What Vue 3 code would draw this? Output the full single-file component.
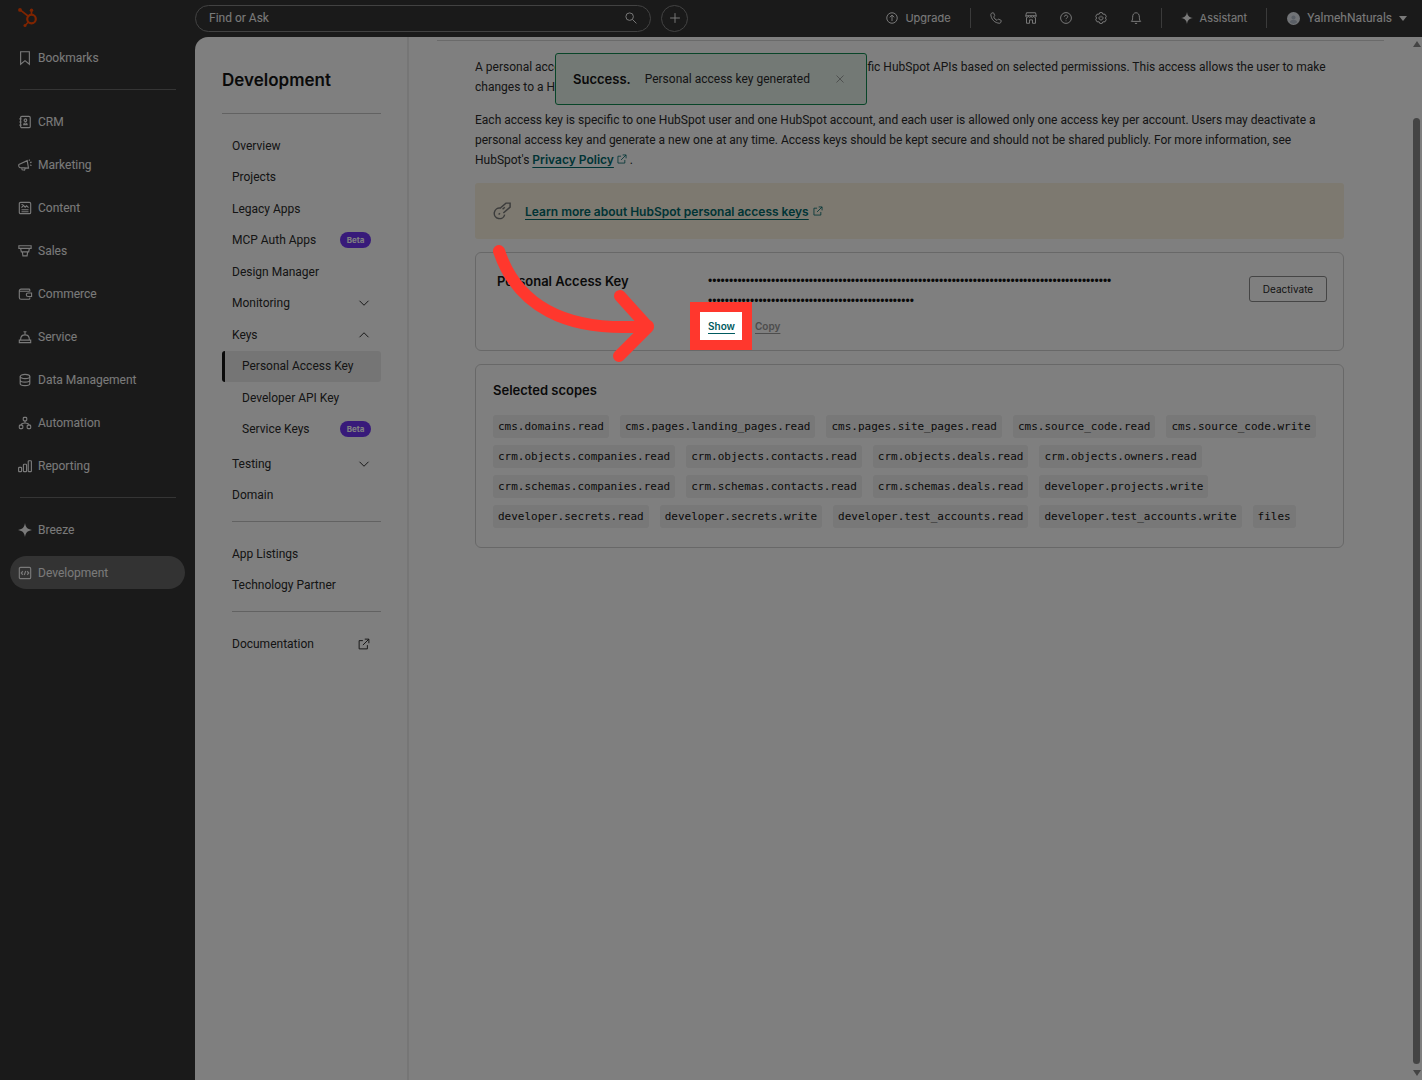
<script setup>
const mainNav = [
  { label: 'CRM', icon: 'crm' },
  { label: 'Marketing', icon: 'marketing' },
  { label: 'Content', icon: 'content' },
  { label: 'Sales', icon: 'sales' },
  { label: 'Commerce', icon: 'commerce' },
  { label: 'Service', icon: 'service' },
  { label: 'Data Management', icon: 'data' },
  { label: 'Automation', icon: 'automation' },
  { label: 'Reporting', icon: 'reporting' },
]

const icons = {
  bookmark: '<path d="M3 .8h10v14.400L8 11l-5 4.200z"/>',
  crm: '<rect x="3" y="1.500" width="11" height="13" rx="1.500"/><path d="M1.500 4.500h2.500M1.500 8h2.500M1.500 11.500h2.500M6.500 11c0-2.400 4-2.400 4 0z"/><circle cx="8.500" cy="6" r="1.500"/>',
  marketing: '<path d="M1 7.500 10.500 3l1.500 8.500-9.500-.5C1 10.800.5 8.500 1 7.500zM4 11.200l.8 2.300 2.700.3.800-2.300M12.500 3l.8-1.200M13.800 5.300l1.700-.6M13.800 8l1.700.6"/>',
  content: '<rect x="1.500" y="1.500" width="13" height="13" rx="1.500"/><path d="M4 7.500 6.200 5l2 2 1.600-1.500L12 7.500M4 10h8M4 12.300h8M4 4h1.500"/>',
  sales: '<path d="M1 2h14v3H1zM3 5h10l-.8 4H3.800zM5 9h6l-.6 4.500H5.600z"/>',
  commerce: '<path d="M13.500 5V3.500a1 1 0 0 0-1-1h-9a2 2 0 0 0-2 2v7.500a2 2 0 0 0 2 2h9a1 1 0 0 0 1-1V12M1.800 4.800H13M15.500 6.800h-4a1.800 1.800 0 0 0 0 4h4z"/>',
  service: '<path d="M1.500 11.500h13v3h-13zM3 11c0-3.500 2-5.500 5-5.500s5 2 5 5.500M8 5.500V2.500M6.300 2h3.400"/>',
  data: '<ellipse cx="8" cy="4" rx="5.500" ry="2.500"/><path d="M2.500 4v8c0 3.300 11 3.300 11 0V4M2.500 8c0 3.300 11 3.300 11 0"/>',
  automation: '<rect x="6" y="1.500" width="4" height="4" rx="1"/><rect x="1.500" y="10.500" width="4" height="4" rx="1"/><rect x="10.500" y="10.500" width="4" height="4" rx="1"/><path d="M8 5.500V8M3.500 10.500c0-2 1-2.500 4.500-2.500s4.500.5 4.500 2.500"/>',
  reporting: '<rect x=".7" y="9.500" width="3.400" height="5" rx=".8"/><rect x="6.200" y="6" width="3.600" height="8.500" rx=".8"/><rect x="11.700" y="2" width="3.600" height="12.500" rx=".8"/>',
  development: '<rect x="1.500" y="1.500" width="13" height="13" rx="1.500"/><path d="M5.500 6 3.700 8l1.800 2M10.500 6l1.800 2-1.800 2M8.800 5.700 7.200 10.300"/>',
  upgrade: '<circle cx="8" cy="8" r="7"/><path d="M8 12V4.500M5 7l3-2.800L11 7"/>',
  phone: '<path d="M2 1.800 3.800 1c.5-.2.900 0 1.100.5l1.300 3c.1.400 0 .8-.3 1L4.900 6.600c.8 2 2.500 3.700 4.500 4.500l1.100-1.200c.3-.3.700-.4 1-.2l3 1.200c.5.200.6.700.5 1.100l-.9 2.200c-.1.500-.6.800-1.100.800C6.500 15 1.100 9.600 1.100 3c0-.6.300-1 .9-1.200z"/>',
  store: '<path d="M2 1h12l1 4H1zM1 5c0 3 3.500 3 3.500 0 0 3 3.500 3 3.500 0 0 3 3.500 3 3.500 0 0 3 3.500 3 3.500 0M2 7.500V15h4v-4.500h4V15h4V7.500"/>',
  help: '<circle cx="8" cy="8" r="7.200"/><path d="M5.800 6.300c0-3 4.500-2.700 4.500-.1C10.300 8 8 7.900 8 9.600M8 11.300v1"/>',
  gear: '<path d="M6.400.8h3.200l.8 2 3 .2 1.600 2.800L13.900 8l1.100 2.200-1.600 2.800-3 .2-.8 2H6.400l-.8-2-3-.2L1 10.200 2.100 8 1 5.800 2.600 3l3-.2z"/><path d="M6.200 6a2.700 2.700 0 1 0 3.600 0M8 4.800v2.700"/>',
  bell: '<path d="M1.800 12.500h12.400C12.900 11.200 12.500 10.500 12.500 7c0-3.700-1.700-6-4.500-6S3.500 3.300 3.500 7c0 3.500-.4 4.200-1.700 5.500zM6.500 15.200h3"/>',
  search: '<circle cx="6.200" cy="6.200" r="5"/><path d="M10 10l5.200 5.200"/>',
  plus: '<path d="M8 1.500v13M1.500 8h13"/>',
  external: '<path d="M6.500 3.500h-5v11h11V9.500M9 1.500h5.500V7M14.500 1.500 6.500 9.500"/>',
  key: '<path d="M6.500 5.400a4.700 4.700 0 1 0 3.900 5.800M6 5.800 11.500 1H15.200v3.600L9.200 9.800M8.500 6.500 10.500 4.700M5 11.200l1.200-1.200"/>',
  down: '<path d="M2 5l6 6 6-6"/>',
  up: '<path d="M2 11l6-6 6 6"/>',
  close: '<path d="M1 1l14 14M15 1 1 15"/>',
}
const sparkle = 'M8 0c.9 5 2.200 6.800 8 8-5.800 1.200-7.100 3-8 8-.9-5-2.200-6.800-8-8 5.800-1.200 7.100-3 8-8z'

const topItems = [
  { label: 'Overview' },
  { label: 'Projects' },
  { label: 'Legacy Apps' },
  { label: 'MCP Auth Apps', beta: true },
  { label: 'Design Manager' },
  { label: 'Monitoring', icon: 'down' },
  { label: 'Keys', icon: 'up' },
  { label: 'Personal Access Key', sub: true, active: true },
  { label: 'Developer API Key', sub: true },
  { label: 'Service Keys', sub: true, beta: true },
]
const devGroups = [
  { id: 'a', items: topItems },
  { id: 'b', items: [{ label: 'Testing', icon: 'down' }, { label: 'Domain' }] },
  { id: 'c', rule: true, items: [{ label: 'App Listings' }, { label: 'Technology Partner' }] },
  { id: 'd', rule: true, items: [{ label: 'Documentation', icon: 'external' }] },
]

const quickActions = [
  { name: 'Calls', icon: 'phone' },
  { name: 'Marketplace', icon: 'store' },
  { name: 'Help', icon: 'help' },
  { name: 'Settings', icon: 'gear' },
  { name: 'Notifications', icon: 'bell' },
]

const scopes = [
  ['cms.domains.read', 'cms.pages.landing_pages.read', 'cms.pages.site_pages.read', 'cms.source_code.read', 'cms.source_code.write'],
  ['crm.objects.companies.read', 'crm.objects.contacts.read', 'crm.objects.deals.read', 'crm.objects.owners.read'],
  ['crm.schemas.companies.read', 'crm.schemas.contacts.read', 'crm.schemas.deals.read', 'developer.projects.write'],
  ['developer.secrets.read', 'developer.secrets.write', 'developer.test_accounts.read', 'developer.test_accounts.write', 'files'],
]
const maskedKey = '•'.repeat(145)
</script>

<template>
  <div class="app">
    <aside class="sidebar">
      <a class="logo" href="#" aria-label="HubSpot">
        <svg viewBox="0 0 20 20" width="20" height="20" fill="none" stroke="currentColor">
          <circle cx="13.500" cy="11" r="4.300" stroke-width="2.200" />
          <path d="M13.500 6.500V3M10 8 2.500 2.200M10.500 14l-3.200 3.200" stroke-width="1.600" />
          <g fill="currentColor" stroke="none">
            <circle cx="13.500" cy="2.200" r="1.700" /><circle cx="2" cy="1.900" r="1.900" /><circle cx="7" cy="17.500" r="1.500" />
          </g>
        </svg>
      </a>
      <nav class="main-nav" aria-label="Main">
        <a class="nav-item" href="#"><svg class="icon" viewBox="0 0 16 16" v-html="icons.bookmark"></svg>Bookmarks</a>
        <hr />
        <a v-for="n in mainNav" :key="n.label" class="nav-item" href="#">
          <svg class="icon" viewBox="0 0 16 16" v-html="icons[n.icon]"></svg>{{ n.label }}
        </a>
        <hr />
        <a class="nav-item" href="#"><svg class="icon solid" viewBox="0 0 16 16"><path :d="sparkle" /></svg>Breeze</a>
        <a class="nav-item current" href="#"><svg class="icon" viewBox="0 0 16 16" v-html="icons.development"></svg>Development</a>
      </nav>
    </aside>

    <div class="body">
      <header class="topbar">
        <label class="search">
          <input type="text" placeholder="Find or Ask" aria-label="Find or Ask" />
          <svg class="icon" viewBox="0 0 16 16" v-html="icons.search"></svg>
        </label>
        <button class="add" aria-label="Create"><svg class="icon" viewBox="0 0 16 16" v-html="icons.plus"></svg></button>
        <div class="tools">
          <button class="tool upgrade"><svg class="icon" viewBox="0 0 16 16" v-html="icons.upgrade"></svg>Upgrade</button>
          <div class="quick">
            <button v-for="q in quickActions" :key="q.name" class="tool" :aria-label="q.name">
              <svg class="icon" viewBox="0 0 16 16" v-html="icons[q.icon]"></svg>
            </button>
          </div>
          <button class="tool assistant"><svg class="icon solid" viewBox="0 0 16 16"><path :d="sparkle" /></svg>Assistant</button>
          <button class="tool account">
            <svg class="avatar" viewBox="0 0 14 14"><circle cx="7" cy="7" r="7" fill="#e4e8ee" /><circle cx="7" cy="6" r="2.200" fill="#b4bfcc" /><path d="M3 11c1-3.500 7-3.500 8 0a6 6 0 0 1-8 0z" fill="#b4bfcc" /></svg>
            YalmehNaturals
            <span class="caret"></span>
          </button>
        </div>
      </header>

      <div class="panel">
        <nav class="dev-nav" aria-label="Development">
          <h2>Development</h2>
          <hr />
          <template v-for="g in devGroups" :key="g.id">
            <hr v-if="g.rule" class="inset" />
            <ul :class="'group-' + g.id">
              <li v-for="i in g.items" :key="i.label">
                <a href="#" :class="{ sub: i.sub, active: i.active }">
                  {{ i.label }}
                  <span v-if="i.beta" class="beta">Beta</span>
                  <svg v-if="i.icon" class="icon" viewBox="0 0 16 16" v-html="icons[i.icon]"></svg>
                </a>
              </li>
            </ul>
          </template>
        </nav>

        <main class="content">
          <div class="inner">
            <p>A personal access key is used to authenticate a user's access to the specific HubSpot APIs based on selected permissions. This access allows the user to make<br />changes to a HubSpot account.</p>
            <p>Each access key is specific to one HubSpot user and one HubSpot account, and each user is allowed only one access key per account. Users may deactivate a<br />personal access key and generate a new one at any time. Access keys should be kept secure and should not be shared publicly. For more information, see<br />HubSpot's <a class="link" href="#">Privacy Policy</a> <svg class="icon ext" viewBox="0 0 16 16" v-html="icons.external"></svg> .</p>

            <div class="tip">
              <svg class="icon key" viewBox="0 0 16 16" v-html="icons.key"></svg>
              <a class="link" href="#">Learn more about HubSpot personal access keys</a>
              <svg class="icon ext" viewBox="0 0 16 16" v-html="icons.external"></svg>
            </div>

            <section class="card key-card">
              <h3>Personal Access Key</h3>
              <div class="key-value">
                <div class="dots">{{ maskedKey }}</div>
                <div class="key-actions">
                  <span class="show"><button class="text-btn">Show</button><span class="spotlight"></span></span>
                  <button class="text-btn muted">Copy</button>
                </div>
              </div>
              <button class="deactivate">Deactivate</button>
              <svg class="arrow" viewBox="0 0 170 130" width="170" height="130" aria-hidden="true">
                <path d="M9 12C27 66 75 94 158 87M130 57l28 31-29 29" />
              </svg>
            </section>

            <section class="card scopes">
              <h3>Selected scopes</h3>
              <div v-for="(row, r) in scopes" :key="r" class="scope-row">
                <code v-for="s in row" :key="s">{{ s }}</code>
              </div>
            </section>
          </div>
        </main>

        <div class="scrollbar" aria-hidden="true">
          <span class="arrow-up"></span>
          <span class="thumb"></span>
          <span class="arrow-down"></span>
        </div>
      </div>
    </div>

    <div class="toast-layer">
      <div class="toast" role="status">
        <strong>Success.</strong>
        <span>Personal access key generated</span>
        <button aria-label="Close"><svg class="icon" viewBox="0 0 16 16" v-html="icons.close"></svg></button>
      </div>
    </div>
  </div>
</template>

<style>
body {
  margin: 0;
  background: #343434;
}
</style>

<style scoped>
.app {
  position: relative;
  display: flex;
  min-height: 100vh;
  overflow: hidden;
  background: #343434;
  color: #2a2a2a;
  font-family: Roboto, "Liberation Sans", sans-serif;
  font-size: 12px;
}
a { color: inherit; text-decoration: none; }
button { padding: 0; border: 0; background: none; color: inherit; font: inherit; }
ul { margin: 0; padding: 0; list-style: none; }
h2, h3, p { margin: 0; }
h2, h3, strong, .link, .key-actions, .beta, .deactivate, .upgrade, .assistant {
  font-family: Inter, "Liberation Sans", sans-serif;
}
hr { margin: 0; border: 0; border-top: 1px solid #c4c4c4; }
.icon {
  flex: none;
  width: 12px;
  height: 12px;
  fill: none;
  stroke: currentColor;
  stroke-width: 1.3;
  overflow: visible;
}
.solid { fill: currentColor; stroke: none; }

.sidebar { flex: none; width: 195px; color: #f4f4f4; }
.logo { display: block; height: 20px; margin: 8px 0 13px 18px; color: #ff4800; }
.logo svg { display: block; }
.main-nav { display: flex; flex-direction: column; gap: 10px; padding: 0 10px; }
.main-nav hr { width: 156px; margin: 5px 0 5px 10px; border-color: #6a6a6a; }
.main-nav .icon { width: 14px; height: 14px; }
.nav-item {
  display: flex;
  align-items: center;
  gap: 6px;
  height: 33px;
  padding-left: 8px;
  border-radius: 17px;
}
.current { background: #666; }

.body { flex: 1; display: flex; flex-direction: column; min-width: 0; }
.topbar { display: flex; align-items: center; height: 36px; padding-bottom: 1px; color: #f4f4f4; }
.search {
  box-sizing: border-box;
  display: flex;
  align-items: center;
  width: 456px;
  height: 27px;
  padding: 0 13px;
  border: 1px solid #858585;
  border-radius: 14px;
}
.search input {
  flex: 1;
  padding: 0;
  border: 0;
  outline: 0;
  background: none;
  color: inherit;
  font: inherit;
}
.search input::placeholder { color: #f4f4f4; opacity: 1; }
.add {
  box-sizing: border-box;
  display: flex;
  align-items: center;
  justify-content: center;
  width: 27px;
  height: 27px;
  margin-left: 10px;
  border: 1px solid #858585;
  border-radius: 50%;
}
.tools { display: flex; align-items: center; margin-left: auto; }
.tool { display: flex; align-items: center; gap: 7px; height: 20px; }
.upgrade { padding-right: 19px; font-size: 11px; }
.quick {
  display: flex;
  gap: 23px;
  padding: 0 19px;
  border-left: 1px solid #777;
  border-right: 1px solid #777;
}
.assistant { padding: 0 19px; border-right: 1px solid #777; font-size: 11px; }
.account { padding: 0 15px 0 20px; }
.avatar { width: 13px; height: 13px; }
.caret { border: 4px solid transparent; border-top: 5px solid #f4f4f4; border-bottom: 0; }

.panel {
  flex: 1;
  display: flex;
  border-top-left-radius: 13px;
  background: #fff;
}
.dev-nav {
  flex: none;
  box-sizing: border-box;
  width: 214px;
  padding: 32px 26px 0 27px;
  border-right: 2px solid #ededed;
}
.dev-nav h2 { margin-bottom: 22px; color: #141414; font-size: 17px; line-height: 22px; font-weight: 600; }
.dev-nav ul { display: grid; grid-auto-rows: 1fr; }
.group-a { height: 315px; margin-top: 16px; }
.group-b { height: 63px; margin: 3px 0 10px; }
.group-c { height: 63px; margin: 16px 0 10px; }
.group-d { height: 32px; margin-top: 16px; }
.inset { margin-left: 10px; }
.dev-nav li a {
  box-sizing: border-box;
  display: flex;
  align-items: center;
  justify-content: space-between;
  height: 100%;
  padding: 0 10px;
}
.dev-nav li .sub { padding-left: 20px; }
.dev-nav li .active { padding-left: 17px; border-left: 3px solid #141414; border-radius: 3px; background: #ebebeb; }
.dev-nav .icon { margin-right: 1px; }
.beta {
  width: 31px;
  border-radius: 8px;
  background: #7034f4;
  color: #fff;
  font-size: 8px;
  line-height: 16px;
  font-weight: 700;
  text-align: center;
}

.content { flex: 1; min-width: 0; padding: 3px 28px 0; }
.inner { padding: 16px 40px 0 38px; border-top: 1px solid #d4d4d4; }
.inner p { margin-bottom: 13px; line-height: 20px; white-space: nowrap; }
.link {
  color: #00686b;
  font-weight: 600;
  text-decoration: underline;
  text-underline-offset: 3px;
}
.ext { width: 10px; height: 10px; color: #00686b; }
.tip {
  display: flex;
  align-items: center;
  height: 56px;
  padding-left: 18px;
  border-radius: 3px;
  background: #faf3e0;
}
.tip .key { width: 18px; height: 18px; margin-right: 14px; color: #777; }
.tip .ext { margin-left: 4px; }
.card { border: 1px solid #d0d0d0; border-radius: 6px; }
.card h3 { color: #141414; font-size: 13px; line-height: 20px; font-weight: 600; }
.key-card {
  position: relative;
  display: flex;
  align-items: flex-start;
  margin-top: 13px;
  padding: 18px 16px 14px 21px;
}
.key-card h3 { width: 211px; }
.key-value { width: 404px; }
.dots {
  color: #141414;
  font: 12px/20px "Liberation Sans", sans-serif;
  word-break: break-all;
}
.key-actions { display: flex; gap: 20px; padding-top: 5px; font-size: 10px; line-height: 20px; font-weight: 600; }
.show { position: relative; display: flex; }
.text-btn { color: #005a60; text-decoration: underline; text-underline-offset: 3px; }
.muted { color: #9a9a9a; }
.spotlight {
  position: absolute;
  z-index: 10;
  inset: -14px -17px -14px -18px;
  border: 10px solid #ff372d;
  box-shadow: 0 0 0 2000px rgba(0, 0, 0, 0.5);
  pointer-events: none;
}
.deactivate {
  box-sizing: border-box;
  width: 78px;
  height: 26px;
  margin: 5px 0 0 auto;
  border: 1px solid #8a8a8a;
  border-radius: 3px;
  font-size: 10px;
}
.arrow {
  position: absolute;
  z-index: 11;
  top: -14px;
  left: 14px;
  fill: none;
  stroke: #ff372d;
  stroke-width: 12;
  stroke-linecap: round;
  stroke-linejoin: round;
}
.scopes { margin-top: 13px; padding: 15px 17px 19px; }
.scopes h3 { margin-bottom: 15px; }
.scope-row { display: flex; gap: 11px; margin-bottom: 7px; }
.scope-row:last-child { margin-bottom: 0; }
code {
  padding: 0 5px;
  border-radius: 3px;
  background: #f0f0f0;
  color: #141414;
  font: 11px/23px "DejaVu Sans Mono", monospace;
}

.scrollbar {
  box-sizing: border-box;
  display: flex;
  flex-direction: column;
  align-items: center;
  width: 10px;
  padding: 4px 2px 4px 1px;
}
.arrow-up { border: 4px solid transparent; border-bottom: 6px solid #888; border-top: 0; }
.arrow-down { border: 4px solid transparent; border-top: 6px solid #888; border-bottom: 0; }
.thumb { flex: 1; width: 7px; margin: 71px 0 6px; border-radius: 4px; background: #888; }

.toast-layer {
  position: absolute;
  top: 53px;
  left: 0;
  right: 0;
  display: flex;
  justify-content: center;
}
.toast {
  box-sizing: border-box;
  display: flex;
  align-items: center;
  gap: 14px;
  width: 312px;
  height: 52px;
  padding: 0 22px 0 17px;
  border: 1px solid #118a50;
  border-radius: 3px;
  background: #e6f2ea;
}
.toast strong { color: #141414; font-size: 13px; font-weight: 600; }
.toast button { display: flex; margin-left: auto; }
.toast .icon { width: 8px; height: 8px; color: #777; }
</style>
